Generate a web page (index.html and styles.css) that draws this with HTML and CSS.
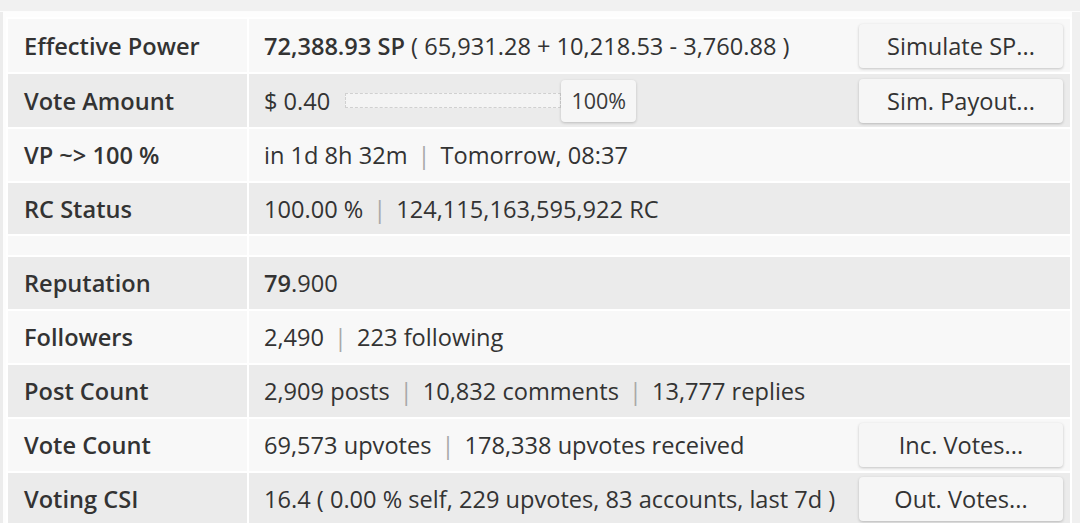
FILE: index.html
```html
<!DOCTYPE html>
<html>
<head>
<meta charset="utf-8">
<link rel="stylesheet" href="styles.css">
</head>
<body>
<div class="topbar"></div>
<div class="frame">
  <table class="info">
    <colgroup><col class="c-label"><col></colgroup>
    <tr class="light tall">
      <th>Effective Power</th>
      <td><div class="cell"><span><b>72,388.93 SP</b> ( 65,931.28 + 10,218.53 - 3,760.88 )</span><button class="btn">Simulate SP...</button></div></td>
    </tr>
    <tr class="dark tall">
      <th>Vote Amount</th>
      <td><div class="cell"><span class="vote"><span>$ 0.40</span><span class="slider"><span class="track"></span><span class="thumb">100%</span></span></span><button class="btn">Sim. Payout...</button></div></td>
    </tr>
    <tr class="light">
      <th>VP ~&gt; 100 %</th>
      <td><div class="cell"><span>in 1d 8h 32m<span class="sep">|</span>Tomorrow, 08:37</span></div></td>
    </tr>
    <tr class="dark short">
      <th>RC Status</th>
      <td><div class="cell"><span>100.00 %<span class="sep">|</span>124,115,163,595,922 RC</span></div></td>
    </tr>
    <tr class="light spacer">
      <th></th>
      <td></td>
    </tr>
    <tr class="dark">
      <th>Reputation</th>
      <td><div class="cell"><span><b>79</b>.900</span></div></td>
    </tr>
    <tr class="light">
      <th>Followers</th>
      <td><div class="cell"><span>2,490<span class="sep">|</span>223 following</span></div></td>
    </tr>
    <tr class="dark">
      <th>Post Count</th>
      <td><div class="cell"><span>2,909 posts<span class="sep">|</span>10,832 comments<span class="sep">|</span>13,777 replies</span></div></td>
    </tr>
    <tr class="light">
      <th>Vote Count</th>
      <td><div class="cell"><span>69,573 upvotes<span class="sep">|</span>178,338 upvotes received</span><button class="btn">Inc. Votes...</button></div></td>
    </tr>
    <tr class="dark">
      <th>Voting CSI</th>
      <td><div class="cell"><span>16.4 ( 0.00 % self, 229 upvotes, 83 accounts, last 7d )</span><button class="btn">Out. Votes...</button></div></td>
    </tr>
  </table>
</div>
</body>
</html>
```

FILE: styles.css
```css
html, body {
  margin: 0;
  padding: 0;
  background: #ffffff;
  overflow: hidden;
}
body {
  font-family: "Open Sans", "Liberation Sans", sans-serif;
  color: #333333;
  font-size: 23.6px;
}
.topbar {
  height: 11px;
  background: #f1f1f1;
  border-bottom: 1px solid #fcfcfc;
}
.frame {
  border-left: 3px solid #ececec;
  border-right: 8px solid #f0f0f0;
  padding: 5px 0 0 3px;
  background: #fdfdfd;
}
.info {
  width: 100%;
  table-layout: fixed;
  border-collapse: separate;
  border-spacing: 2px;
  background: #ffffff;
  margin: 0;
}
.c-label { width: 239px; }
.info th {
  text-align: left;
  font-weight: 600;
  padding: 0 0 0 16px;
  height: 52px;
  white-space: nowrap;
}
.info td {
  padding: 0 7px 0 15px;
  height: 52px;
}
.tall th, .tall td { height: 53px; }
.short th, .short td { height: 51px; }
.light th, .light td { background: #f8f8f8; }
.dark th, .dark td { background: #ebebeb; }
.spacer th, .spacer td { height: 19px; }
.cell {
  display: flex;
  align-items: center;
  justify-content: space-between;
  white-space: nowrap;
}
.info b { font-weight: 600; }
.sep {
  color: #a8a8a8;
  margin: 0 10px;
}
.btn {
  font-family: "Open Sans", "Liberation Sans", sans-serif;
  font-size: 23.6px;
  color: #333333;
  width: 204px;
  height: 44px;
  border: none;
  border-radius: 4px;
  background: #f6f6f6;
  box-shadow: 0 1px 3px rgba(0, 0, 0, 0.22);
  padding: 0;
}
.vote {
  display: flex;
  align-items: center;
}
.slider {
  display: flex;
  align-items: center;
  margin-left: 15px;
}
.track {
  width: 214px;
  height: 13px;
  background: #f4f4f4;
  border: 1px dashed #d0d0d0;
}
.thumb {
  width: 75px;
  height: 42px;
  display: flex;
  align-items: center;
  justify-content: center;
  background: #f6f6f6;
  border-radius: 4px;
  box-shadow: 0 1px 3px rgba(0, 0, 0, 0.2);
  font-size: 21.5px;
  color: #3a3a3a;
}
```
